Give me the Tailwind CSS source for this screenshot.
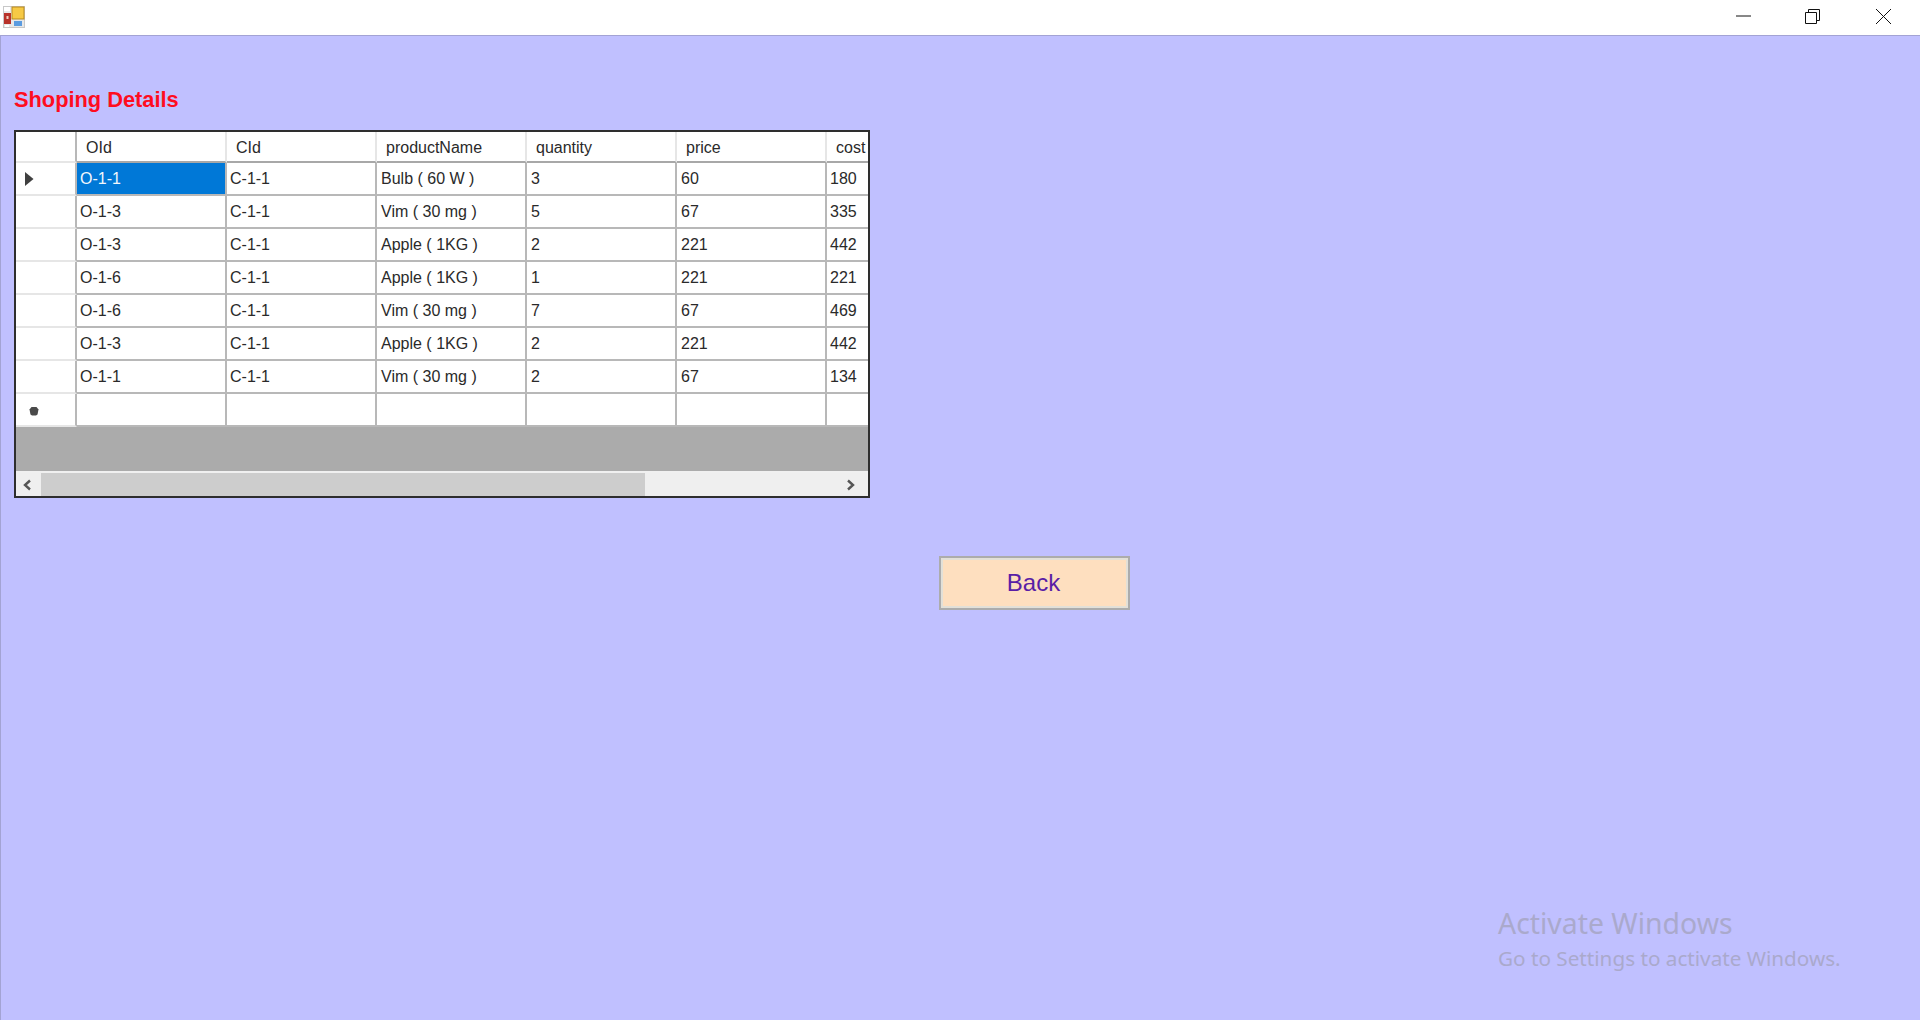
<!DOCTYPE html>
<html lang="en">
<head>
    <meta charset="UTF-8">
    <title>Shoping Details</title>
    <script src="https://cdn.jsdelivr.net/npm/@tailwindcss/browser@4"></script>
</head>
<body class="relative flex h-[1020px] w-[1920px] flex-col overflow-hidden bg-[#c0c0ff] font-['Liberation_Sans',Arial,sans-serif] text-[#2a2a2a]">
    <!-- title bar -->
    <header class="flex h-[36px] shrink-0 items-start justify-between border-b border-b-[#a3a3d4] bg-white">
        <svg class="mt-[6px] ml-[3px]" width="22" height="22" viewBox="0 0 22 22">
            <rect x="0.5" y="0.5" width="21" height="21" fill="#e8e8e8" stroke="#c8c8c8"/>
            <rect x="9" y="1" width="12" height="12" fill="#f6c945" stroke="#b98a1e"/>
            <rect x="1" y="7" width="7" height="11" fill="#b8322a"/>
            <rect x="3.5" y="10" width="2" height="3" fill="#f0d0c0"/>
            <rect x="11" y="15" width="8" height="5" fill="#5a9be0"/>
            <rect x="1" y="1" width="6" height="4" fill="#fff"/>
            <rect x="2" y="19" width="4" height="2" fill="#fff"/>
        </svg>
        <div class="flex items-start">
            <svg class="mt-[15px] mr-[54px]" width="15" height="2" viewBox="0 0 15 2"><path d="M0 1h15" stroke="#111" stroke-width="1"/></svg>
            <svg class="mt-[9px] mr-[56px]" width="15" height="15" viewBox="0 0 15 15" fill="none" stroke="#111"><path d="M0.5 3.5h11v11h-11zM3.5 3.5v-3h11v11h-3"/></svg>
            <svg class="mt-[9px] mr-[29px]" width="15" height="15" viewBox="0 0 15 15" fill="none" stroke="#111"><path d="M0 0l15 15M15 0l-15 15"/></svg>
        </div>
    </header>

    <main class="flex flex-1 flex-col items-start border-l border-l-[#a3a3d4] pl-[13px]">
        <h1 class="mt-[52px] h-[42px] text-[21.8px] leading-[24px] font-bold text-[#ff0d1f]">Shoping Details</h1>

        <!-- data grid -->
        <div class="h-[368px] w-[856px] overflow-hidden border-2 border-[#2e2e2e] bg-[#ababab]">
            <table class="w-[852px] table-fixed border-separate border-spacing-0 text-[16px] leading-[18px] [&_td]:h-[33px] [&_td]:overflow-hidden [&_td]:border-r-2 [&_td]:border-b-2 [&_td]:border-[#b8b8b8] [&_td]:bg-white [&_td]:pl-[4px] [&_td]:whitespace-nowrap [&_td:nth-child(2)]:pl-[3px] [&_td:nth-child(3)]:pl-[3px] [&_td:last-child]:border-r-0 [&_td:last-child]:pl-[3px] [&_td:first-child]:border-b-[#e6e6e6] [&_th]:h-[31px] [&_th]:overflow-hidden [&_th]:border-r-2 [&_th]:border-b-2 [&_th]:border-r-[#e6e6e6] [&_th]:border-b-[#a8a8a8] [&_th]:bg-white [&_th]:pt-[2px] [&_th]:pl-[9px] [&_th]:text-left [&_th]:font-normal [&_th:last-child]:border-r-0 [&_th:first-child]:border-r-[#b8b8b8] [&_th:first-child]:border-b-[#e6e6e6]">
                <colgroup>
                    <col class="w-[61px]"><col class="w-[150px]"><col class="w-[150px]"><col class="w-[150px]"><col class="w-[150px]"><col class="w-[150px]"><col class="w-[41px]">
                </colgroup>
                <thead>
                    <tr><th></th><th>OId</th><th>CId</th><th>productName</th><th>quantity</th><th>price</th><th>cost</th></tr>
                </thead>
                <tbody>
                    <tr>
                        <td><svg class="ml-[5px]" width="9" height="14" viewBox="0 0 9 14"><path d="M0 0l8.5 7-8.5 7z" fill="#404040"/></svg></td>
                        <td class="!bg-[#0078d7] text-[#f2f7fc]">O-1-1</td><td>C-1-1</td><td>Bulb ( 60 W )</td><td>3</td><td>60</td><td>180</td>
                    </tr>
                    <tr><td></td><td>O-1-3</td><td>C-1-1</td><td>Vim ( 30 mg )</td><td>5</td><td>67</td><td>335</td></tr>
                    <tr><td></td><td>O-1-3</td><td>C-1-1</td><td>Apple ( 1KG )</td><td>2</td><td>221</td><td>442</td></tr>
                    <tr><td></td><td>O-1-6</td><td>C-1-1</td><td>Apple ( 1KG )</td><td>1</td><td>221</td><td>221</td></tr>
                    <tr><td></td><td>O-1-6</td><td>C-1-1</td><td>Vim ( 30 mg )</td><td>7</td><td>67</td><td>469</td></tr>
                    <tr><td></td><td>O-1-3</td><td>C-1-1</td><td>Apple ( 1KG )</td><td>2</td><td>221</td><td>442</td></tr>
                    <tr><td></td><td>O-1-1</td><td>C-1-1</td><td>Vim ( 30 mg )</td><td>2</td><td>67</td><td>134</td></tr>
                    <tr>
                        <td><svg class="mt-[3px] ml-[9px]" width="10" height="10" viewBox="0 0 10 10"><path d="M2.5 1h5l2 2.5-1 5-1.5 1H3l-1.500-1-1-5z" fill="#4a4a4a"/></svg></td>
                        <td></td><td></td><td></td><td></td><td></td><td></td>
                    </tr>
                </tbody>
            </table>
            <!-- horizontal scrollbar -->
            <div class="mt-[44px] flex h-[25px] items-center border-t-2 border-t-[#f0f0f0] bg-[#efefef]">
                <svg class="ml-[6px]" width="10" height="12" viewBox="0 0 10 12" fill="none"><path d="M8 1.5L3 6l5 4.5" stroke="#555" stroke-width="2.4"/></svg>
                <div class="ml-[9px] h-[23px] w-[604px] bg-[#cdcdcd]"></div>
                <svg class="ml-[201px]" width="10" height="12" viewBox="0 0 10 12" fill="none"><path d="M2 1.500L7 6l-5 4.500" stroke="#555" stroke-width="2.4"/></svg>
            </div>
        </div>

        <button class="mt-[58px] ml-[925px] h-[54px] w-[191px] border-2 border-[#acacac] bg-[#fedfbf] pr-[2px] text-[24px] text-[#5a1ea6] shadow-[inset_0_0_0_2px_#e2e0d8]">Back</button>
    </main>

    <!-- activation watermark -->
    <div class="absolute top-[904px] left-[1498px] font-['Noto_Sans',sans-serif] text-[#aaa9cc]">
        <p class="text-[28.4px] leading-[38px]">Activate Windows</p>
        <p class="mt-[2px] text-[20.7px] leading-[29px]">Go to Settings to activate Windows.</p>
    </div>
</body>
</html>
